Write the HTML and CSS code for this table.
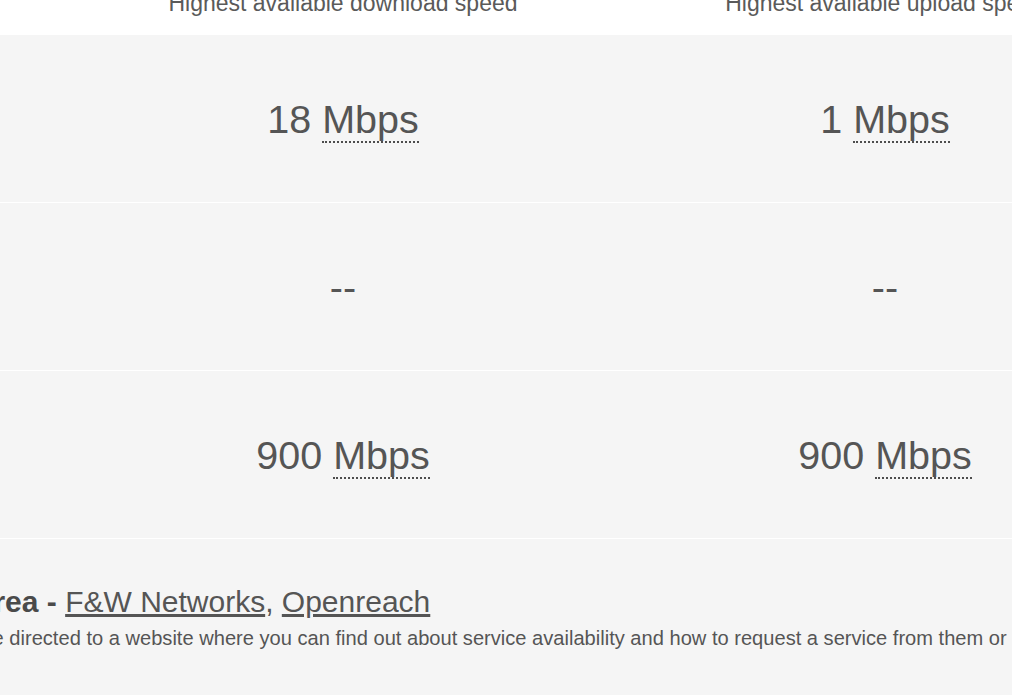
FILE: index.html
```html
<!DOCTYPE html>
<html lang="en">
<head>
<meta charset="utf-8">
<title>Broadband speeds</title>
<link rel="stylesheet" href="styles.css">
</head>
<body>
<div class="page">
  <table class="speeds">
    <thead>
      <tr>
        <th class="label"></th>
        <th class="col">Highest available download speed</th>
        <th class="col">Highest available upload speed</th>
      </tr>
    </thead>
    <tbody>
      <tr>
        <td class="label"></td>
        <td class="val">18 <abbr title="Megabits per second">Mbps</abbr></td>
        <td class="val">1 <abbr title="Megabits per second">Mbps</abbr></td>
      </tr>
      <tr>
        <td class="label"></td>
        <td class="val">--</td>
        <td class="val">--</td>
      </tr>
      <tr>
        <td class="label"></td>
        <td class="val">900 <abbr title="Megabits per second">Mbps</abbr></td>
        <td class="val">900 <abbr title="Megabits per second">Mbps</abbr></td>
      </tr>
    </tbody>
  </table>
  <div class="providers">
    <p class="providers-title"><strong>Network operators in your area - </strong><a href="#">F&amp;W Networks</a>, <a href="#">Openreach</a></p>
    <p class="providers-note">By clicking on a link you will be directed to a website where you can find out about service availability and how to request a service from them or contact them.</p>
  </div>
</div>
</body>
</html>
```

FILE: styles.css
```css
html, body {
  margin: 0;
  padding: 0;
  background: #ffffff;
  overflow: hidden;
}

body {
  font-family: "Liberation Sans", Arial, sans-serif;
  color: #555555;
  width: 1012px;
  height: 700px;
}

.page {
  margin-top: -10px;
}

.speeds {
  border-collapse: collapse;
  table-layout: fixed;
  width: 1156px;
}

.speeds .label {
  width: 72px;
  padding: 0;
}

.speeds .col {
  width: 542px;
  padding: 0 0 18px;
  font-size: 23px;
  line-height: 27px;
  font-weight: normal;
  color: #5a5a5a;
  text-align: center;
  background: #ffffff;
}

.speeds tbody td {
  background: #f5f5f5;
  border-bottom: 1px solid #ffffff;
  height: 167px;
  padding: 0;
}

.speeds .val {
  text-align: center;
  vertical-align: middle;
  font-size: 39.5px;
  line-height: 46px;
  color: #555555;
}

.val abbr {
  text-decoration: none;
  border-bottom: 2px dotted #4d4d4d;
}

.providers {
  background: #f5f5f5;
  height: 111px;
  padding-top: 45px;
  white-space: nowrap;
}

.providers p {
  margin: 0;
}

.providers-title {
  font-size: 30px;
  line-height: 36px;
  margin-left: -405px !important;
  color: #555555;
}

.providers-title strong {
  color: #4a4a4a;
}

.providers-title a {
  color: #555555;
  text-decoration: underline;
}

.providers-note {
  font-size: 20.1px;
  line-height: 26px;
  margin-top: 5px !important;
  margin-left: -271px !important;
  color: #555555;
}
```
